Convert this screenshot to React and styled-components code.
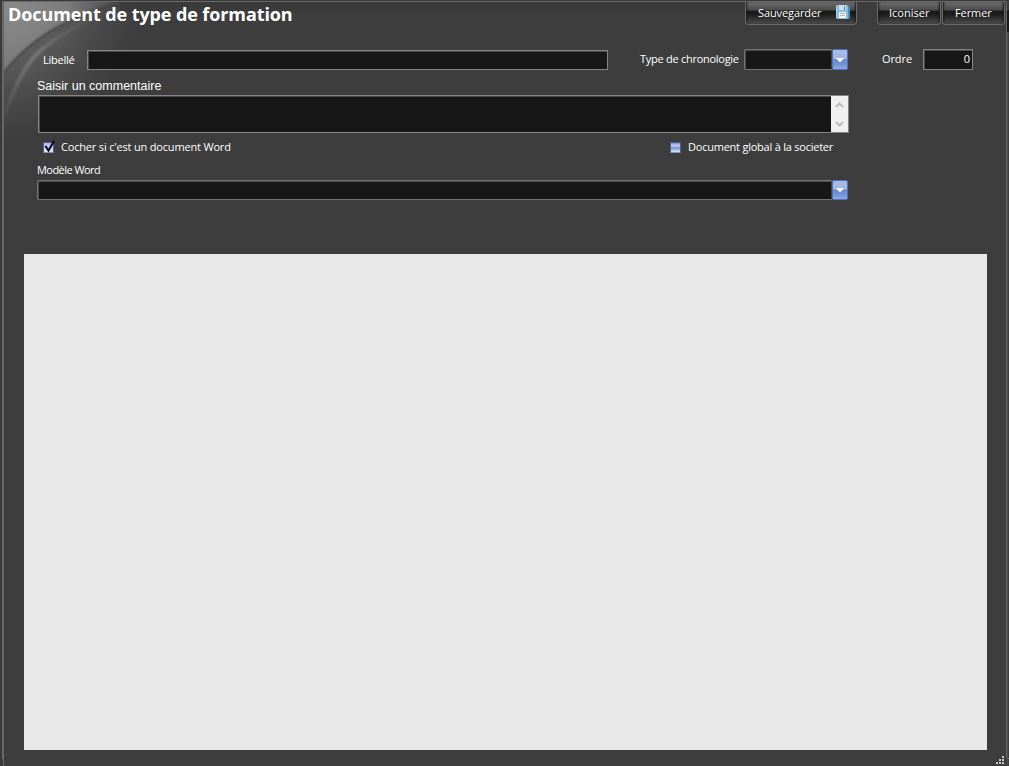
import React from "react";
import styled, { createGlobalStyle } from "styled-components";

const Global = createGlobalStyle`
  * { box-sizing: border-box; }
  html, body { margin: 0; background: #3d3d3d; overflow: hidden; }
  body { font-family: "Trebuchet MS", "Open Sans", sans-serif; font-size: 11px; color: #fff; }
`;

const Window = styled.main`
  position: relative;
  width: 1009px;
  height: 766px;
  overflow: hidden;
  background: #3d3d3d;
  display: flex;
  flex-direction: column;
`;

const Backdrop = styled.svg`
  position: absolute;
  left: 0;
  top: 0;
  pointer-events: none;
`;

const Header = styled.header`
  position: relative;
  display: flex;
  justify-content: space-between;
  height: 49px;
  padding: 2px 4px 0 8px;
`;

const Title = styled.h1`
  margin: 0;
  font-size: 18px;
  font-weight: 700;
  line-height: 24px;
  letter-spacing: ${(p) => p.$spacing}px;
  white-space: nowrap;
`;

const Actions = styled.div`
  display: flex;
  align-items: flex-start;
`;

const Button = styled.button`
  display: flex;
  align-items: center;
  justify-content: space-between;
  width: ${(p) => p.$width}px;
  height: 23px;
  margin-right: ${(p) => p.$gap || 0}px;
  padding: 0 ${(p) => p.$right || 11}px 1px ${(p) => p.$left || 11}px;
  border: 1px solid #6a6a6a;
  border-top: 0;
  border-radius: 0 0 4px 4px;
  background: linear-gradient(#6c6c6c 0, #4c4c4c 8px, #1a1a1a 9px, #1c1c1c 12px, #484848 21px);
  box-shadow: inset 2px 0 2px -1px #1a1a1a, inset -2px 0 2px -1px #1a1a1a;
  color: #fff;
  font: inherit;
  letter-spacing: ${(p) => p.$spacing || 0}px;
  white-space: nowrap;
`;

const Form = styled.form`
  position: relative;
  display: flex;
  flex-direction: column;
  height: 205px;
  padding-left: 37px;
`;

const Row = styled.div`
  display: flex;
  align-items: ${(p) => p.$align || "center"};
  height: ${(p) => p.$height}px;
`;

const Label = styled.label`
  flex: none;
  width: ${(p) => p.$width}px;
  margin-left: ${(p) => p.$indent || 0}px;
  line-height: ${(p) => p.$line || 16}px;
  letter-spacing: ${(p) => p.$spacing || 0}px;
  white-space: nowrap;
`;

const CommentLabel = styled(Label)`
  font-family: Arial, "Liberation Sans", sans-serif;
  font-size: 12.5px;
`;

const Field = styled.div`
  flex: none;
  width: ${(p) => p.$width}px;
  height: ${(p) => p.$height || 20}px;
  margin-top: ${(p) => p.$drop || 0}px;
  padding-right: ${(p) => p.$pad || 0}px;
  border: 1px solid #858585;
  box-shadow: inset 1px 1px #4a4a4a;
  background: #171717;
  line-height: 18px;
  text-align: right;
  display: flex;
  justify-content: flex-end;
`;

const Combo = styled(Field)`
  border: 1px solid #747474;
  border-right: 0;
  border-radius: 2px;
`;

const DropButton = styled.span`
  display: flex;
  align-items: center;
  justify-content: center;
  width: 16px;
  height: calc(100% + 2px);
  margin-top: -1px;
  border: 1px solid #4d72bb;
  border-radius: 2px;
  background: linear-gradient(#a7bce5 0, #a1b7e3 45%, #6789cf 50%, #7697d8 80%, #92aee4);
  box-shadow: -1px 0 #444;
`;

const Scrollbar = styled.span`
  display: flex;
  flex-direction: column;
  align-items: center;
  justify-content: space-between;
  width: 17px;
  height: 100%;
  padding: 6px 0 5px;
  background: #f0f0f0;
`;

const Check = styled.span`
  flex: none;
  width: 11px;
  height: 11px;
  border: 1px solid #58588c;
  border-bottom-color: #8793a6;
  background: ${(p) =>
    p.$checked
      ? "linear-gradient(#a9b8e6, #c6d2f4 50%, #d1eafa)"
      : "linear-gradient(#7792d1 0, #c2cdf0 30%, #7994d4 55%, #d1eafa)"};
  svg { display: block; overflow: visible; margin: -2px 0 0; }
`;

const Content = styled.section`
  position: relative;
  width: 963px;
  height: 496px;
  margin-left: 24px;
  background: #e8e8e8;
`;

const Grip = styled.svg`
  position: absolute;
  right: 4px;
  bottom: 1px;
`;

function Arrow() {
  return (
    <svg width="8" height="4" shapeRendering="crispEdges">
      <path d="M0 0h8v1H0zM1 1h6v1H1zM2 2h4v1H2zM3 3h2v1H3z" fill="#f4f1e8" />
    </svg>
  );
}

function Chevron({ down }) {
  return (
    <svg width="9" height="6">
      <path d={down ? "M1 1l3.5 3.5L8 1" : "M1 5l3.5-3.5L8 5"} fill="none" stroke="#bdbdbd" strokeWidth="2" />
    </svg>
  );
}

function Floppy() {
  return (
    <svg width="14" height="15" viewBox="0 0 14 15">
      <path d="M3 1h10l1 1v11l-1 1H3z" fill="#4c8db5" />
      <path d="M1 0h10l1 1v13H1l-1-1V1z" fill="#86bfdd" />
      <path d="M0 1h1v12H0z" fill="#a4d5ea" />
      <path d="M3 0h7v5H3z" fill="#c9dfec" />
      <path d="M8 1h1v4H8z" fill="#5088ab" />
      <path d="M3 7h7v6H3z" fill="#f4f4f0" />
      <path d="M4 8h5v1H4zm0 2h5v1H4z" fill="#b4b4b2" />
    </svg>
  );
}

function Frame() {
  return (
    <Backdrop width="1009" height="766">
      <defs>
        <radialGradient id="glow" gradientUnits="userSpaceOnUse" cx="10" cy="8" r="110">
          <stop offset="0" stopColor="#898989" />
          <stop offset=".5" stopColor="#7c7c7c" />
          <stop offset="1" stopColor="#4a4a4a" />
        </radialGradient>
        <radialGradient id="haze" gradientUnits="userSpaceOnUse" cx="0" cy="0" r="140">
          <stop offset="0" stopColor="#707070" />
          <stop offset=".45" stopColor="#5a5a5a" />
          <stop offset=".75" stopColor="#484848" />
          <stop offset="1" stopColor="#3d3d3d" />
        </radialGradient>
        <linearGradient id="beam" gradientUnits="userSpaceOnUse" x1="5" y1="115" x2="120" y2="10">
          <stop offset="0" stopColor="#808080" stopOpacity=".1" />
          <stop offset=".4" stopColor="#808080" stopOpacity=".8" />
          <stop offset="1" stopColor="#555" stopOpacity="0" />
        </linearGradient>
        <filter id="soft"><feGaussianBlur stdDeviation="1" /></filter>
      </defs>
      <path d="M0 0h150v150H0z" fill="url(#haze)" />
      <path d="M4 2H118Q42 24 4 72z" fill="url(#glow)" />
      <path d="M4 72Q42 24 118 2" fill="none" stroke="#484848" strokeWidth="2" filter="url(#soft)" />
      <path d="M5 114Q18 76 34 57Q50 38 112 8" fill="none" stroke="url(#beam)" strokeWidth="4" filter="url(#soft)" />
      <path d="M120 2h625v9H120z" fill="#383838" opacity=".6" />
      <path d="M0 0h1009v1H0zM0 0h2v766H0z" fill="#3a3a3a" />
      <path d="M3 1h1003v1H3zM2 9h2v750H2zM3 1h1v8H3zM3 759h1v7H3zM1006 2h1v756h-1z" fill="#686868" />
      <path d="M1007 9h1v757h-1z" fill="#4b4b4b" />
      <path d="M1007 10h2v22h-2z" fill="#191919" />
      <path d="M1007 758h2v1h-2z" fill="#777" />
    </Backdrop>
  );
}

export default function App() {
  return (
    <Window>
      <Global />
      <Frame />
      <Header>
        <Title $spacing={-0.1}>Document de type de formation</Title>
        <Actions>
          <Button $width={112} $gap={20} $left={12} $right={6} $spacing={-0.1}>Sauvegarder<Floppy /></Button>
          <Button $width={64} $gap={1}>Iconiser</Button>
          <Button $width={63} $left={12} $right={10} $spacing={-0.1}>Fermer</Button>
        </Actions>
      </Header>
      <Form>
        <Row $height={22} $align="flex-start">
          <Label $width={44} $indent={6} $line={22} $spacing={-0.25}>Libellé</Label>
          <Field $width={521} $drop={1} />
          <Label $width={104} $indent={32} $line={20} $spacing={-0.27}>Type de chronologie</Label>
          <Combo $width={104} $height={21}><DropButton><Arrow /></DropButton></Combo>
          <Label $width={41} $indent={34} $line={20} $spacing={-0.1}>Ordre</Label>
          <Field $width={50} $height={21} $pad={2}>0</Field>
        </Row>
        <Row $height={24} $align="flex-end">
          <CommentLabel $width={140} $line={18}>Saisir un commentaire</CommentLabel>
        </Row>
        <Row $height={38}>
          <Label $width={1} />
          <Field $width={811} $height={38}><Scrollbar><Chevron /><Chevron down /></Scrollbar></Field>
        </Row>
        <Row $height={28}>
          <Label $width={6} />
          <Check $checked>
            <svg width="11" height="11"><path d="M1.5 5l3 4.5L10 0" fill="none" stroke="#080818" strokeWidth="2" /></svg>
          </Check>
          <Label $width={609} $indent={7} $spacing={-0.18}>Cocher si c'est un document Word</Label>
          <Check />
          <Label $width={160} $indent={7} $spacing={-0.23}>Document global à la societer</Label>
        </Row>
        <Row $height={19} $align="flex-start">
          <Label $width={80} $line={17} $spacing={-0.55}>Modèle Word</Label>
        </Row>
        <Row $height={20}>
          <Combo $width={811}><DropButton><Arrow /></DropButton></Combo>
        </Row>
      </Form>
      <Content />
      <Grip width="9" height="9" shapeRendering="crispEdges">
        <path d="M6 0h2v2H6zM3 3h2v2H3zM6 3h2v2H6zM0 6h2v2H0zM3 6h2v2H3zM6 6h2v2H6z" fill="#c8c8c8" />
      </Grip>
    </Window>
  );
}
